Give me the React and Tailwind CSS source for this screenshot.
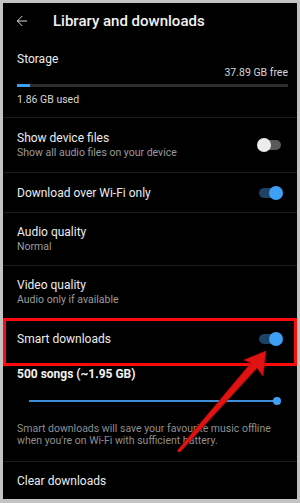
import { ArrowLeft } from "lucide-react";

function Toggle({ on }) {
    if (on) {
        return (
            <div className="relative w-[26px] h-[16px] flex items-center">
                <div className="ml-[2px] w-[20px] h-[10px] rounded-full bg-[#1d4263]" />
                <div className="absolute right-0 top-[1px] w-[14px] h-[14px] rounded-full bg-[#3ea0f5]" />
            </div>
        );
    }
    return (
        <div className="relative w-[26px] h-[16px] flex items-center">
            <div className="ml-[4px] w-[20px] h-[10px] rounded-full bg-[#5a5a5a]" />
            <div className="absolute left-0 top-[1px] w-[14px] h-[14px] rounded-full bg-[#ececec]" />
        </div>
    );
}

function Row({ title, sub, toggle, height }) {
    return (
        <div className={`flex items-center justify-between pl-[14px] pr-[14px] border-b border-[#1c1c1c] ${height}`}>
            <div className="flex flex-col">
                <span className="text-[12px] leading-[16px] text-[#ececec]">{title}</span>
                {sub && <span className="text-[10.5px] leading-[14px] text-[#9b9b9b]">{sub}</span>}
            </div>
            {toggle !== undefined && <Toggle on={toggle} />}
        </div>
    );
}

export default function App() {
    return (
        <div className="w-[300px] h-[503px] bg-[#c3c3c3] pt-[3px] pl-[3px] pr-[3px] pb-[4px]" style={{ fontFamily: "Roboto, 'Noto Sans', sans-serif" }}>
            <div className="relative h-full bg-black overflow-hidden flex flex-col">
                {/* header */}
                <div className="h-[36px] flex items-center shrink-0">
                    <ArrowLeft className="ml-[11px] w-[16px] h-[16px] text-[#d8d8d8]" strokeWidth={1.5} />
                    <span className="ml-[23px] text-[15px] font-medium text-[#f2f2f2]">Library and downloads</span>
                </div>

                {/* storage */}
                <div className="h-[79px] shrink-0 border-b border-[#1c1c1c] pl-[14px] pr-[9px] pt-[12px]">
                    <div className="text-[12px] leading-[16px] text-[#ececec]">Storage</div>
                    <div className="text-right text-[10.5px] leading-[14px] text-[#d6d6d6] -mt-[1px]">37.89 GB free</div>
                    <div className="mt-[4px] h-[3px] bg-[#2e2e2e] flex">
                        <div className="w-[13px] h-full bg-[#3ea0f5]" />
                    </div>
                    <div className="mt-[6px] text-[10.5px] leading-[14px] text-[#d6d6d6]">1.86 GB used</div>
                </div>

                <Row title="Show device files" sub="Show all audio files on your device" toggle={false} height="h-[55px]" />
                <Row title="Download over Wi-Fi only" toggle={true} height="h-[40px]" />
                <Row title="Audio quality" sub="Normal" height="h-[53px]" />
                <Row title="Video quality" sub="Audio only if available" height="h-[53px]" />

                {/* smart downloads */}
                <div className="h-[40px] shrink-0 flex items-center justify-between pl-[14px] pr-[14px]">
                    <span className="text-[12px] leading-[16px] text-[#ececec]">Smart downloads</span>
                    <Toggle on={true} />
                </div>
                <div className="h-[103px] shrink-0 border-b border-[#1c1c1c] pl-[14px] pr-[14px]">
                    <div className="mt-[7px] text-[12px] leading-[16px] font-bold text-[#f2f2f2]">500 songs (~1.95 GB)</div>
                    <div className="mt-[15px] ml-[12px] mr-[2px] flex items-center">
                        <div className="flex-1 h-[2px] bg-[#3a8fd8]" />
                        <div className="w-[8px] h-[8px] rounded-full bg-[#3ea0f5] -ml-[1px]" />
                    </div>
                    <div className="mt-[18px] text-[10.5px] leading-[12px] text-[#8f8f8f]">
                        Smart downloads will save your favourite music offline when you're on Wi-Fi with sufficient battery.
                    </div>
                </div>

                <div className="flex-1 flex items-center pl-[14px]">
                    <span className="text-[12px] leading-[16px] text-[#ececec]">Clear downloads</span>
                </div>

                {/* annotation box */}
                <div className="absolute left-0 top-[315px] w-[294px] h-[48px] border-[3px] border-[#ff0a0a]" />

                {/* annotation arrow */}
                <svg className="absolute left-0 top-0" width="294" height="496" viewBox="3 3 294 496">
                    <polygon
                        points="266,351 244,360 251,363 177,451 180,452 257,368 263,376"
                        fill="#e01212"
                        stroke="#b00a0a"
                        strokeWidth="0.8"
                        strokeLinejoin="round"
                    />
                </svg>
            </div>
        </div>
    );
}
